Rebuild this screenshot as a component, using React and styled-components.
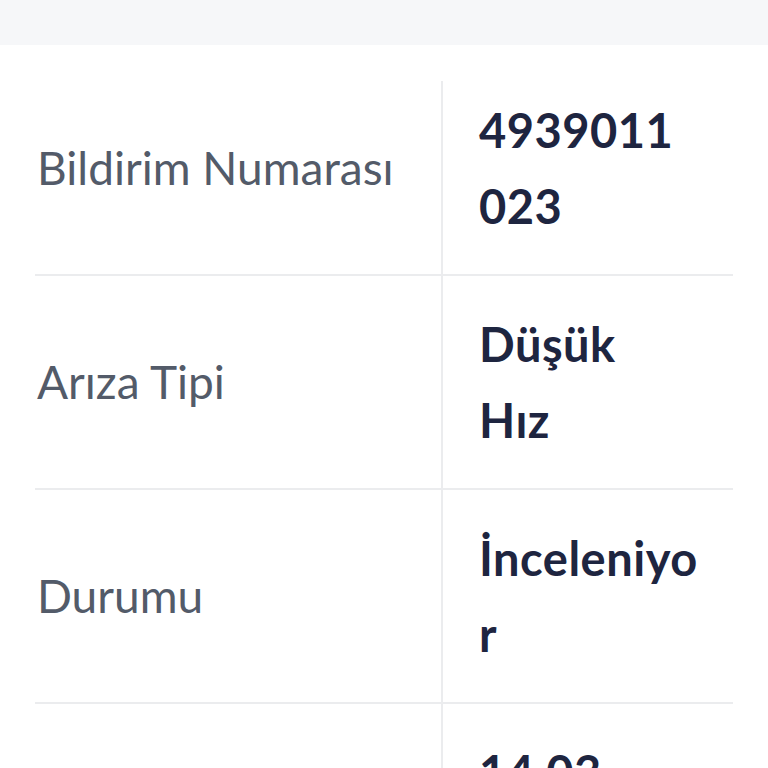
import React from "react";
import styled, { createGlobalStyle } from "styled-components";

const Global = createGlobalStyle`
  html, body { margin: 0; padding: 0; background: #ffffff; }
  body { font-family: Lato, "Noto Sans", sans-serif; }
  * { box-sizing: border-box; }
`;

const Page = styled.div`
  width: 768px;
  min-height: 768px;
  background: #ffffff;
`;

const TopBar = styled.div`
  height: 45px;
  background: #f6f7f9;
`;

const Table = styled.div`
  display: flex;
  flex-direction: column;
  padding: 17px 35px 0 35px;
`;

const Row = styled.div`
  display: grid;
  grid-template-columns: 406px 292px;
  min-height: 214px;
  border-bottom: 2px solid #ebecee;
`;

const Label = styled.div`
  display: flex;
  align-items: center;
  padding: 0 0 0 2px;
  font-size: 46px;
  line-height: 76px;
  font-weight: 400;
  color: #535b69;
`;

const Value = styled.div`
  position: relative;
  display: flex;
  align-items: center;
  padding: 30px 34px 30px 38px;
  font-size: 47px;
  line-height: 76px;
  font-weight: 700;
  letter-spacing: 0.5px;
  word-spacing: 6px;
  color: #1e2540;
  overflow-wrap: anywhere;
  &::before {
    content: "";
    position: absolute;
    left: 0;
    top: ${(p) => (p.$first ? "19px" : "0")};
    bottom: -2px;
    width: 2px;
    background: #ebecee;
  }
`;

const ValueText = styled.span`
  display: block;
  width: 100%;
`;

const rows = [
  { label: "Bildirim Numarası", value: "4939011023" },
  { label: "Arıza Tipi", value: "Düşük Hız" },
  { label: "Durumu", value: "İnceleniyor" },
  {
    label: "Bildirim Tarihi",
    value: (
      <>
        {"14.03."}
        <wbr />
        {"2024 10:45"}
      </>
    ),
  },
];

export default function App() {
  return (
    <Page>
      <Global />
      <TopBar />
      <Table>
        {rows.map((r, i) => (
          <Row key={r.label}>
            <Label>{r.label}</Label>
            <Value $first={i === 0}>
              <ValueText>{r.value}</ValueText>
            </Value>
          </Row>
        ))}
      </Table>
    </Page>
  );
}
